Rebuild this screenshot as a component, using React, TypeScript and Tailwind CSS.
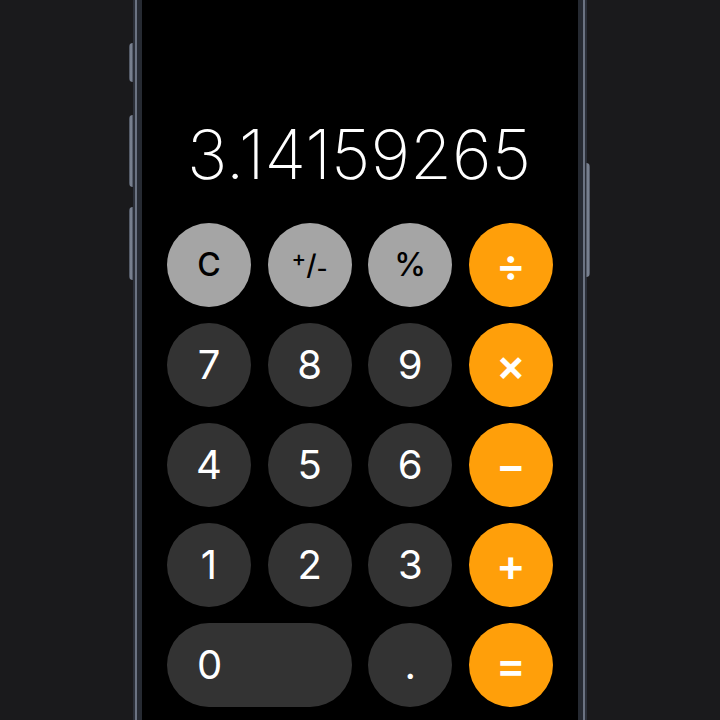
type Key = {
  label: React.ReactNode
  kind: 'fn' | 'num' | 'op'
  wide?: boolean
}

const keys: Key[] = [
  { label: 'C', kind: 'fn' },
  {
    label: (
      <span className="flex items-center">
        <span className="relative -top-[7px] text-[22px]">+</span>
        <span className="text-[28px]">/</span>
        <span className="relative top-[4px] text-[24px]">-</span>
      </span>
    ),
    kind: 'fn',
  },
  { label: '%', kind: 'fn' },
  { label: '÷', kind: 'op' },
  { label: '7', kind: 'num' },
  { label: '8', kind: 'num' },
  { label: '9', kind: 'num' },
  { label: '×', kind: 'op' },
  { label: '4', kind: 'num' },
  { label: '5', kind: 'num' },
  { label: '6', kind: 'num' },
  { label: '−', kind: 'op' },
  { label: '1', kind: 'num' },
  { label: '2', kind: 'num' },
  { label: '3', kind: 'num' },
  { label: '+', kind: 'op' },
  { label: '0', kind: 'num', wide: true },
  { label: '.', kind: 'num' },
  { label: '=', kind: 'op' },
]

function CalcKey({ k }: { k: Key }) {
  const base = 'h-[84px] rounded-full flex items-center select-none'
  const color =
    k.kind === 'fn'
      ? 'bg-[#a5a5a5] text-black text-[32px] font-medium'
      : k.kind === 'op'
        ? 'bg-[#ff9f0a] text-white text-[44px] font-semibold'
        : 'bg-[#333333] text-white text-[40px] font-normal'

  if (k.wide) {
    return (
      <div className={`${base} ${color} col-span-2 pl-[30px]`}>
        <span>{k.label}</span>
      </div>
    )
  }
  return <div className={`${base} ${color} w-[84px] justify-center`}>{k.label}</div>
}

function SideButton({ className }: { className: string }) {
  return <div className={`absolute w-[4px] bg-gradient-to-r from-[#434955] via-[#8a93a3] to-[#434955] ${className}`} />
}

export default function App() {
  return (
    <div
      className="w-[720px] h-[720px] bg-[#1a1a1c] overflow-hidden flex justify-center"
      style={{ fontFamily: 'Inter, "Noto Sans", sans-serif' }}
    >
      {/* Phone */}
      <div className="relative mt-[-80px] w-[454px] h-[880px] shrink-0 rounded-[60px] bg-[#2b2f38] p-[2px]">
        {/* side buttons */}
        <SideButton className="-left-[4px] top-[123px] h-[39px] rounded-l-sm" />
        <SideButton className="-left-[4px] top-[195px] h-[72px] rounded-l-sm" />
        <SideButton className="-left-[4px] top-[287px] h-[73px] rounded-l-sm" />
        <SideButton className="-right-[3px] top-[243px] h-[114px] rounded-r-sm" />

        <div className="h-full rounded-[58px] bg-[#6b7382] p-[2px]">
          <div className="h-full rounded-[56px] bg-[#262a32] p-[5px]">
            {/* Screen */}
            <div className="h-full rounded-[52px] bg-black flex flex-col pt-[191px] px-[25px]">
              <div className="text-white text-[68px] font-extralight leading-none tracking-normal text-right pr-[22px] h-[72px]">
                3.14159265
              </div>
              <div className="mt-[31px] grid grid-cols-4 gap-x-[16.5px] gap-y-[16px]">
                {keys.map((k, i) => (
                  <CalcKey key={i} k={k} />
                ))}
              </div>
            </div>
          </div>
        </div>
      </div>
    </div>
  )
}
